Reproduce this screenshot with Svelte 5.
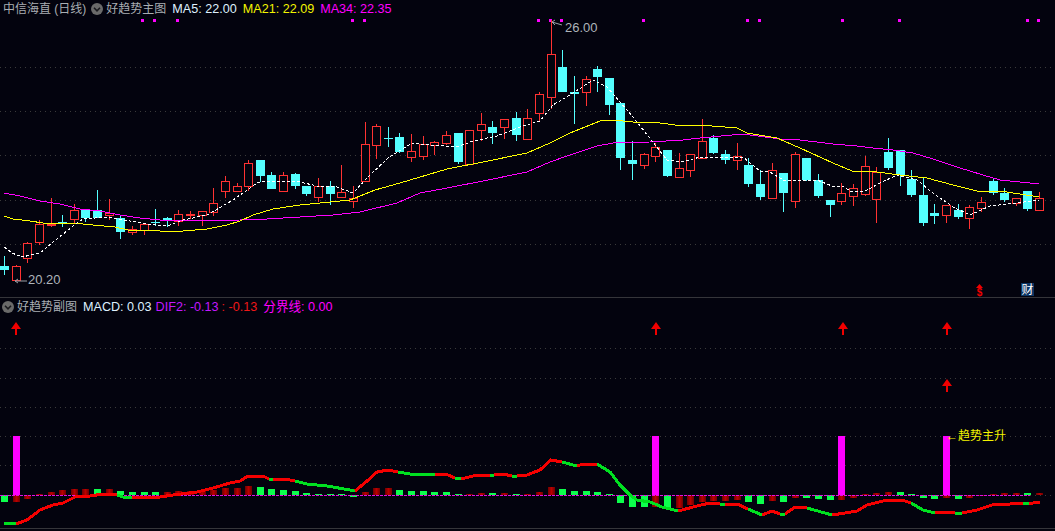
<script>
  // [up, wickTop, bodyTop, bodyBottom, wickBottom]
  const candles = [
    [0,256,266,270,275],[1,265,266,280,280],[1,242,243,258,263],[1,220,224,242,245],[1,198,224,225,227],
    [0,215,222,223,227],[1,204,210,219,223],[0,210,210,218,222],[0,190,210,218,218],[1,199,213,215,220],
    [0,215,218,232,239],[1,226,229,232,235],[1,224,224,230,235],[0,209,222,223,226],[0,217,218,220,227],
    [1,210,214,221,226],[1,211,214,215,219],[1,211,211,215,226],[1,188,203,212,216],[1,176,181,191,198],
    [1,183,186,191,192],[1,160,163,186,191],[0,160,160,176,182],[0,172,175,189,189],[1,172,175,191,191],
    [0,173,174,186,189],[0,186,186,194,196],[1,178,186,197,202],[0,181,186,194,205],[1,165,192,197,198],
    [1,186,198,201,208],[1,122,144,181,181],[1,124,126,145,159],[0,127,138,139,147],[0,133,137,152,153],
    [1,134,151,157,162],[1,136,144,156,160],[1,141,142,145,155],[1,131,135,143,145],[0,133,133,162,164],
    [1,130,130,164,165],[1,113,124,130,141],[0,121,127,133,144],[1,119,119,127,139],[0,112,118,135,141],
    [1,109,118,139,139],[1,92,94,113,122],[1,20,54,97,109],[0,50,67,92,92],[0,76,92,94,124],
    [1,76,79,92,106],[0,66,69,77,92],[0,78,78,105,115],[0,103,103,158,170],[0,141,160,164,180],
    [1,153,154,165,169],[1,143,147,156,162],[0,150,150,176,177],[1,153,168,177,177],[1,154,154,170,177],
    [1,119,141,158,158],[0,135,138,153,154],[0,150,154,160,164],[1,143,156,160,170],[0,158,165,184,187],
    [0,170,184,197,200],[1,163,170,198,198],[0,173,173,193,212],[1,152,154,201,208],[0,158,158,180,181],
    [0,174,180,196,198],[0,200,200,205,217],[1,183,193,201,205],[1,184,188,196,206],[1,156,166,194,196],
    [1,167,172,199,223],[0,138,152,168,170],[0,150,150,175,186],[0,170,179,195,197],[0,178,195,223,226],
    [0,204,213,216,224],[1,205,205,215,223],[0,204,210,217,219],[1,205,207,218,229],[1,197,202,208,212],
    [0,179,181,193,195],[0,188,193,200,202],[1,198,198,203,206],[0,191,191,209,211],[1,192,198,210,211]
  ];

  const step = 11.63;
  const cx = (i) => Math.round(4 + i * step);

  const ma34 = "4,193 20,196 40,201 60,204 80,209 100,211 120,215 140,218 160,220 183,221 240,220 267,219 300,217 333,215 360,212 397,203 420,193 447,188 483,181 527,172 550,162 567,156 597,146 613,143 650,142 683,140 700,138 743,134 780,139 800,140 833,144 857,146 873,148 893,150 913,153 933,159 960,168 983,175 1000,180 1020,182 1039,184";
  const ma21 = "4,216 13,219 30,221 43,223 73,223 93,225 115,227 128,230 160,231 183,231 207,229 227,225 240,221 253,215 273,209 300,205 320,203 350,200 375,190 400,183 447,169 483,162 527,153 550,143 570,133 600,121 613,120 633,122 660,123 683,126 700,125 737,128 747,133 777,138 800,148 833,163 852,171 877,172 900,175 927,178 953,185 977,191 1007,192 1039,197";
  const ma5 = "4,247 12,253 22,257 40,253 53,242 77,223 83,219 107,217 130,221 147,224 167,226 183,220 207,215 233,200 257,183 267,181 300,182 317,186 337,187 353,193 367,178 388,158 412,143 430,145 457,147 473,141 497,136 520,127 540,121 553,105 573,93 593,80 607,87 633,117 652,141 667,160 683,162 700,157 743,157 760,171 770,172 783,180 817,180 832,186 842,186 852,192 865,191 882,182 897,175 917,180 933,193 953,207 970,215 990,206 1017,203 1039,200";

  const dots = [142, 154, 177, 352, 364, 538, 550, 561, 643, 747, 759, 842, 899, 1027, 1038];

  // histogram heights, per candle, above (+) or below (-) the zero line
  const macd = [
    ["g",-7],["r",-7],["r",-4],["r",1.5],["r",3],["r",5],["r",6],["r",6],["g",6],["r",6],
    ["g",4],["g",3],["g",3],["g",3],["r",3],["r",4],["r",4],["r",4],["r",5],["r",7],
    ["r",7],["r",9],["g",8],["g",6],["g",5],["g",4],["g",2],["g",1],["g",1],["g",1],
    ["g",-2],["r",3.5],["r",7],["r",7],["g",5],["g",4],["g",4],["g",3],["g",3],["g",1],
    ["r",1],["r",2],["g",2],["r",2],["g",1],["r",1],["r",3],["r",8],["g",6],["g",4],
    ["g",4],["g",3],["g",1],["g",-8],["g",-11.5],["g",-11.5],["r",-11.5],["g",-13],["r",-13],["r",-10],
    ["r",-7],["r",-6],["r",-6],["r",-5],["g",-7],["g",-9],["r",-6],["g",-7],["r",-3],["g",-3],
    ["g",-4],["g",-5],["r",-5],["r",-3],["r",1],["r",2],["r",3.5],["g",3.5],["g",1.5],["g",-3],
    ["g",-4],["r",-3],["g",-4],["r",-3],["r",-1],["r",1],["r",2],["r",2],["g",2],["r",2]
  ];

  const spikes = [1, 56, 72, 81];
  const arrows = [[16, 322], [656, 322], [843, 322], [947, 322], [947, 379]];

  const trend = [
    ["g", "4,523 16,524"],
    ["r", "16,524 27,520 40,510 53,505 63,503 75,497 90,496 103,494 117,495"],
    ["g", "117,495 123,497 132,498"],
    ["r", "132,498 140,497 160,497 173,495 197,492 213,488 230,483 240,481 248,476 263,476 269,479"],
    ["g", "269,479 273,479"],
    ["r", "273,479 290,480 295,481"],
    ["g", "295,481 307,484 327,486 350,490 355,491"],
    ["r", "355,491 367,481 377,472 388,470 398,472"],
    ["g", "398,472 410,474 435,474"],
    ["r", "435,474 448,475 455,478"],
    ["g", "455,478 461,479"],
    ["r", "461,479 477,475 490,475"],
    ["g", "490,475 494,475"],
    ["r", "494,475 503,474 512,476"],
    ["g", "512,476 517,476"],
    ["r", "517,476 527,475 540,470 551,460 562,462"],
    ["g", "562,462 577,466"],
    ["r", "577,466 583,464 597,464"],
    ["g", "597,464 610,472 620,485 630,495 637,500 650,502 662,507 678,511"],
    ["r", "678,511 697,506 710,503 720,504"],
    ["g", "720,504 725,504"],
    ["r", "725,504 737,504 748,509"],
    ["g", "748,509 762,515"],
    ["r", "762,515 772,511 780,514"],
    ["g", "780,514 785,514"],
    ["r", "785,514 795,507 807,508"],
    ["g", "807,508 832,515"],
    ["r", "832,515 845,513 857,511 867,505 887,500 902,500 911,503"],
    ["g", "911,503 923,510 935,513"],
    ["r", "935,513 952,512 955,513"],
    ["g", "955,513 962,513"],
    ["r", "962,513 977,510 992,505 1010,504 1023,503"],
    ["g", "1023,503 1029,504"],
    ["r", "1029,504 1033,503 1040,502"]
  ];
</script>

<main class="page">
  <section class="pane upper">
    <header class="legend">
      <span class="name">中信海直 (日线)</span>
      <svg class="toggle" viewBox="0 0 12 12" aria-hidden="true">
        <circle cx="6" cy="6" r="6" />
        <path d="M3 4.8 L6 7.8 L9 4.8" />
      </svg>
      <span class="name tight">好趋势主图</span>
      <span class="white">MA5: 22.00</span>
      <span class="yellow">MA21: 22.09</span>
      <span class="magenta">MA34: 22.35</span>
    </header>
    <svg class="chart" width="1055" height="279" viewBox="0 18 1055 279">
      {#each [67, 111, 155, 200, 244] as y}
        <line class="grid" x1="0" x2="1055" y1={y + 0.5} y2={y + 0.5} />
      {/each}

      {#each dots as x}
        <rect class="dot" x={x - 1} y="19" width="3" height="3" />
      {/each}

      {#each candles as [up, wickTop, top, bottom, wickBottom], i}
        {#if up}
          <line class="wick red" x1={cx(i) + 0.5} x2={cx(i) + 0.5} y1={wickTop} y2={top} />
          <line class="wick red" x1={cx(i) + 0.5} x2={cx(i) + 0.5} y1={bottom} y2={wickBottom} />
          <rect class="hollow" x={cx(i) - 3.5} y={top + 0.5} width="8" height={bottom - top} />
        {:else}
          <line class="wick cyan" x1={cx(i) + 0.5} x2={cx(i) + 0.5} y1={wickTop} y2={wickBottom} />
          <rect class="solid" x={cx(i) - 4} y={top} width="9" height={bottom - top} />
        {/if}
      {/each}

      <polyline class="line ma34" points={ma34} />
      <polyline class="line ma21" points={ma21} />
      <polyline class="line ma5" points={ma5} />

      <path class="pointer" d="M552 22 L562 25 M552 22 L555 20 M552 22 L555 25" />
      <text class="extreme" x="565" y="32">26.00</text>
      <path class="pointer" d="M15 281 L27 281 M15 281 L18 279 M15 281 L18 283" />
      <text class="extreme" x="28" y="284">20.20</text>

      <path class="cash-top" d="M979.5 284 L983 288 L976 288 Z" />
      <text class="cash" x="979.5" y="296">$</text>
      <rect class="fin-box" x="1021" y="283" width="13" height="13" />
      <text class="fin" x="1027.5" y="294">财</text>

      <path class="corner" d="M1050 10 L1055 15" />
    </svg>
  </section>

  <section class="pane lower">
    <header class="legend">
      <svg class="toggle" viewBox="0 0 12 12" aria-hidden="true">
        <circle cx="6" cy="6" r="6" />
        <path d="M3 4.8 L6 7.8 L9 4.8" />
      </svg>
      <span class="name tight">好趋势副图</span>
      <span class="white">MACD: 0.03</span>
      <span class="purple">DIF2: -0.13</span>
      <span class="red-text">: -0.13</span>
      <span class="magenta">分界线: 0.00</span>
    </header>
    <svg class="chart" width="1055" height="215" viewBox="0 316 1055 215">
      <defs>
        <linearGradient id="bar-red">
          <stop offset="0" stop-color="#6e0000" />
          <stop offset="0.5" stop-color="#bb0000" />
          <stop offset="1" stop-color="#6e0000" />
        </linearGradient>
      </defs>

      {#each [348, 378, 407, 436, 465] as y}
        <line class="grid" x1="0" x2="1055" y1={y + 0.5} y2={y + 0.5} />
      {/each}
      <line class="grid" x1="1030" x2="1055" y1="495.5" y2="495.5" />

      {#each spikes as i}
        <rect class="spike" x={cx(i) - 3} y="436" width="7" height="59" />
      {/each}

      {#each macd as [tone, h], i}
        <rect
          class={tone === "g" ? "bar-green" : "bar-red"}
          x={cx(i) - 3}
          y={h > 0 ? 495 - h : 495}
          width="7"
          height={Math.abs(h)}
        />
      {/each}

      <line class="zero" x1="0" x2="1030" y1="495.5" y2="495.5" />

      {#each trend as [tone, pts]}
        <polyline class={tone === "g" ? "trend green" : "trend red"} points={pts} />
      {/each}

      {#each arrows as [x, y]}
        <path class="arrow" d="M{x} {y} L{x + 5} {y + 7} L{x + 1} {y + 7} L{x + 1} {y + 13} L{x - 1} {y + 13} L{x - 1} {y + 7} L{x - 5} {y + 7} Z" />
      {/each}

      <text class="tag" x="946" y="440">←趋势主升</text>
      <line class="base" x1="0" x2="1055" y1="528.5" y2="528.5" />
    </svg>
  </section>
</main>

<style>
  :global(body) {
    margin: 0;
    background: #03030e;
  }

  .page {
    display: flex;
    flex-direction: column;
    width: 1055px;
    height: 531px;
    overflow: hidden;
    background: #03030e;
    font-family: "Liberation Sans", "Noto Sans CJK SC", sans-serif;
  }

  .pane {
    display: flex;
    flex-direction: column;
  }

  .lower {
    border-top: 1px solid #35353a;
  }

  .legend {
    display: flex;
    align-items: center;
    gap: 5px;
    height: 18px;
    padding-left: 3px;
    font-size: 12.6px;
    line-height: 14px;
    white-space: nowrap;
  }

  .upper .white,
  .upper .yellow,
  .upper .magenta {
    margin-left: 1px;
  }

  .lower .legend {
    padding-left: 2px;
  }

  .name {
    color: #a9aeb3;
    font-size: 12px;
  }

  .tight {
    margin-left: -2px;
  }

  .lower .tight {
    margin-right: 1px;
  }

  .white {
    color: #dff0ff;
  }

  .yellow {
    color: #f4f400;
  }

  .magenta {
    color: #ff00ff;
  }

  .purple {
    margin-left: -1px;
    color: #c418ff;
  }

  .red-text {
    margin-left: -2px;
    color: #f01818;
  }

  .lower .magenta {
    margin-left: 1px;
  }

  .toggle {
    width: 12px;
    height: 12px;
    flex: none;
  }

  .toggle circle {
    fill: #6a6a6a;
  }

  .toggle path {
    fill: none;
    stroke: #1a1a1e;
    stroke-width: 1.6;
  }

  .chart {
    display: block;
    flex: none;
  }

  .grid {
    stroke: #3a3a3a;
    stroke-dasharray: 1 4;
  }

  .dot {
    fill: #ff00ff;
  }

  .wick {
    shape-rendering: crispEdges;
  }

  .wick.red {
    stroke: #ff3232;
  }

  .wick.cyan {
    stroke: #54ffff;
  }

  .hollow {
    fill: #03030e;
    stroke: #ff3232;
    shape-rendering: crispEdges;
  }

  .solid {
    fill: #54ffff;
    shape-rendering: crispEdges;
  }

  .line {
    fill: none;
    shape-rendering: crispEdges;
  }

  .ma34 {
    stroke: #ff00ff;
  }

  .ma21 {
    stroke: #ffff00;
  }

  .ma5 {
    stroke: #ffffff;
    stroke-dasharray: 3 2;
  }

  .pointer {
    fill: none;
    stroke: #9aa0a6;
  }

  .extreme {
    fill: #aeb4ba;
    font-size: 13px;
  }

  .cash-top {
    fill: #f00000;
  }

  .cash {
    fill: #f00000;
    font-size: 10px;
    font-weight: 700;
    text-anchor: middle;
  }

  .fin-box {
    fill: #0c3564;
  }

  .fin {
    fill: #ffffff;
    font-size: 12px;
    text-anchor: middle;
  }

  .corner {
    stroke: #777777;
    stroke-dasharray: 1 1;
  }

  .spike {
    fill: #ff00ff;
    shape-rendering: crispEdges;
  }

  .bar-green {
    fill: #0cff4c;
    shape-rendering: crispEdges;
  }

  .bar-red {
    fill: url(#bar-red);
    shape-rendering: crispEdges;
  }

  .zero {
    stroke: #e010e0;
    stroke-dasharray: 3 1;
  }

  .trend {
    fill: none;
    stroke-width: 3;
    shape-rendering: crispEdges;
  }

  .trend.red {
    stroke: #f50000;
  }

  .trend.green {
    stroke: #00e020;
  }

  .arrow {
    fill: #f00000;
  }

  .tag {
    fill: #f4f400;
    font-size: 12px;
  }

  .base {
    stroke: #35353a;
  }
</style>
